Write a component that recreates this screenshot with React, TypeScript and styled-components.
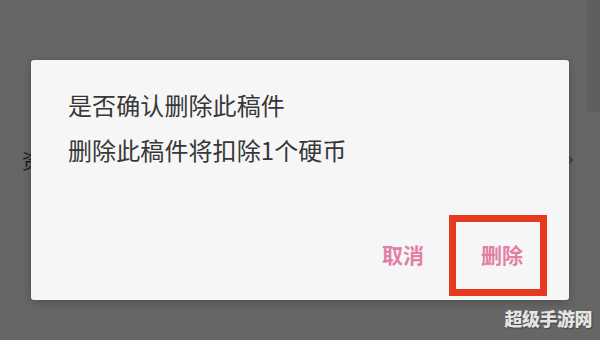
import React from 'react';
import styled, { createGlobalStyle } from 'styled-components';
import { ChevronRight } from 'lucide-react';

const GlobalStyle = createGlobalStyle`
  html, body {
    margin: 0;
    padding: 0;
    background: #666666;
  }
  body {
    font-family: "Noto Sans CJK SC", "Noto Sans", sans-serif;
  }
`;

const Screen = styled.div`
  position: relative;
  width: 600px;
  height: 340px;
  overflow: hidden;
  background: #666666;
`;

// the dimmed page behind the dialog
const PageBehind = styled.div`
  display: flex;
  flex-direction: column;
  padding-top: 146px;
`;

const BehindRow = styled.div`
  display: flex;
  align-items: center;
  justify-content: space-between;
  height: 28px;
  padding: 0 22px 0 22px;
  color: #1e1e1e;
  font-size: 20px;
`;

const SideStrip = styled.div`
  position: absolute;
  top: 0;
  right: 0;
  width: 13px;
  height: 112px;
  background: #5f5f5f;
`;

const Dialog = styled.div`
  position: absolute;
  left: 31px;
  top: 60px;
  width: 538px;
  height: 240px;
  box-sizing: border-box;
  background: #f6f6f7;
  border-radius: 3px;
  box-shadow: 0 2px 8px rgba(0, 0, 0, 0.25);
  display: flex;
  flex-direction: column;
`;

const Message = styled.div`
  padding: 22px 0 0 37px;
  color: #373737;
  font-size: 24px;
  line-height: 45px;
  letter-spacing: 0.1px;
`;

const Actions = styled.div`
  margin-top: auto;
  display: flex;
  justify-content: flex-end;
  gap: 21px;
  padding: 0 28px 22px 0;
`;

const ActionButton = styled.button`
  position: relative;
  height: 48px;
  padding: 0 18px;
  border: none;
  background: transparent;
  color: #e27fa6;
  font-family: "Noto Sans CJK SC", sans-serif;
  font-size: 21px;
  font-weight: 700;
  cursor: pointer;
`;

const Highlight = styled.span`
  position: absolute;
  left: -14px;
  top: -15px;
  width: 98px;
  height: 81px;
  box-sizing: border-box;
  border: 7px solid #e6391e;
  pointer-events: none;
`;

const Watermark = styled.div`
  position: absolute;
  right: 8px;
  bottom: 9px;
  color: #e4e4e4;
  font-family: "Noto Sans CJK SC", sans-serif;
  font-size: 18px;
  font-weight: 900;
  letter-spacing: -0.5px;
  text-shadow: 1px 1px 1px rgba(0, 0, 0, 0.35);
`;

export default function App() {
  return (
    <>
      <GlobalStyle />
      <Screen>
        <SideStrip />
        <PageBehind>
          <BehindRow>
            <span>资料</span>
            <ChevronRight size={16} color="#3a3a3a" strokeWidth={2.5} />
          </BehindRow>
        </PageBehind>

        <Dialog>
          <Message>
            <div>是否确认删除此稿件</div>
            <div>删除此稿件将扣除1个硬币</div>
          </Message>
          <Actions>
            <ActionButton>取消</ActionButton>
            <ActionButton>
              删除
              <Highlight />
            </ActionButton>
          </Actions>
        </Dialog>

        <Watermark>超级手游网</Watermark>
      </Screen>
    </>
  );
}
